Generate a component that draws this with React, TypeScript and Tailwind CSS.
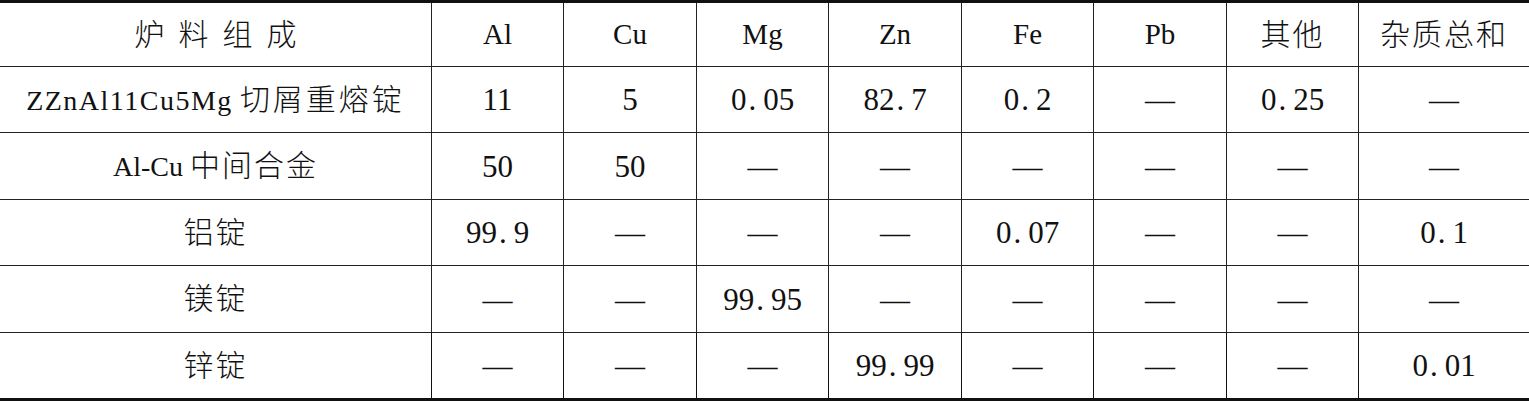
import React from "react";

// 炉料组成表 (质量分数 %)
type Cell = string;

const headers: Cell[] = ["Al", "Cu", "Mg", "Zn", "Fe", "Pb", "其他", "杂质总和"];

const rows: { name: React.ReactNode; values: Cell[] }[] = [
  {
    name: (
      <>
        <span className="tracking-[1.5px]">ZZnAl11Cu5Mg</span>{" "}
        <span className="text-[30px] font-light tracking-[3px]">切屑重熔锭</span>
      </>
    ),
    values: ["11", "5", "0.05", "82.7", "0.2", "—", "0.25", "—"],
  },
  {
    name: (
      <>
        <span>Al-Cu</span> <span className="text-[30px] font-light tracking-[2px]">中间合金</span>
      </>
    ),
    values: ["50", "50", "—", "—", "—", "—", "—", "—"],
  },
  {
    name: <span className="text-[30px] font-light tracking-[2px]">铝锭</span>,
    values: ["99.9", "—", "—", "—", "0.07", "—", "—", "0.1"],
  },
  {
    name: <span className="text-[30px] font-light tracking-[2px]">镁锭</span>,
    values: ["—", "—", "99.95", "—", "—", "—", "—", "—"],
  },
  {
    name: <span className="text-[30px] font-light tracking-[2px]">锌锭</span>,
    values: ["—", "—", "—", "99.99", "—", "—", "—", "0.01"],
  },
];

const rowHeights = ["h-[66px]", "h-[67px]", "h-[66px]", "h-[67px]", "h-[68px]"];

// 小数点后留一点空，像排版里的 "0. 05"
const Num = ({ v }: { v: string }) => {
  if (!v.includes(".")) return <span>{v}</span>;
  const [a, b] = v.split(".");
  return (
    <span>
      {a}
      <span className="ml-[2px] mr-[7px]">.</span>
      {b}
    </span>
  );
};

const isCjk = (s: string) => /[\u4e00-\u9fff]/.test(s);

export default function App() {
  return (
    <div className="w-[1529px] h-[401px] bg-white text-[#111] font-['Liberation_Serif','Noto_Sans_CJK_SC',serif] text-[29px] leading-none">
      <table className="w-full table-fixed border-separate border-spacing-0 border-t-[3px] border-[#111]">
        <colgroup>
          <col className="w-[432px]" />
          <col className="w-[132px]" />
          <col className="w-[133px]" />
          <col className="w-[132px]" />
          <col className="w-[133px]" />
          <col className="w-[132px]" />
          <col className="w-[133px]" />
          <col className="w-[132px]" />
          <col />
        </colgroup>
        <thead>
          <tr>
            <th className="h-[64px] p-0 font-normal text-center border-b border-r border-[#222]">
              <span className="text-[30px] font-light tracking-[14px] pl-[14px]">炉料组成</span>
            </th>
            {headers.map((h, i) => (
              <th
                key={h}
                className={
                  "h-[64px] p-0 font-normal text-center border-b border-[#222] " +
                  (i < headers.length - 1 ? "border-r" : "")
                }
              >
                {isCjk(h) ? <span className="text-[30px] font-light tracking-[2px]">{h}</span> : h}
              </th>
            ))}
          </tr>
        </thead>
        <tbody>
          {rows.map((r, ri) => {
            const last = ri === rows.length - 1;
            const bottom = last ? "border-b-[3px] border-[#111]" : "border-b border-[#222]";
            return (
              <tr key={ri}>
                <td className={`${rowHeights[ri]} p-0 text-center text-[28px] border-r ${bottom}`}>{r.name}</td>
                {r.values.map((v, vi) => (
                  <td
                    key={vi}
                    className={`${rowHeights[ri]} p-0 text-center text-[31px] ${bottom} ${
                      vi < r.values.length - 1 ? "border-r" : ""
                    }`}
                  >
                    {v === "—" ? <span className="text-[30px]">—</span> : <Num v={v} />}
                  </td>
                ))}
              </tr>
            );
          })}
        </tbody>
      </table>
    </div>
  );
}
